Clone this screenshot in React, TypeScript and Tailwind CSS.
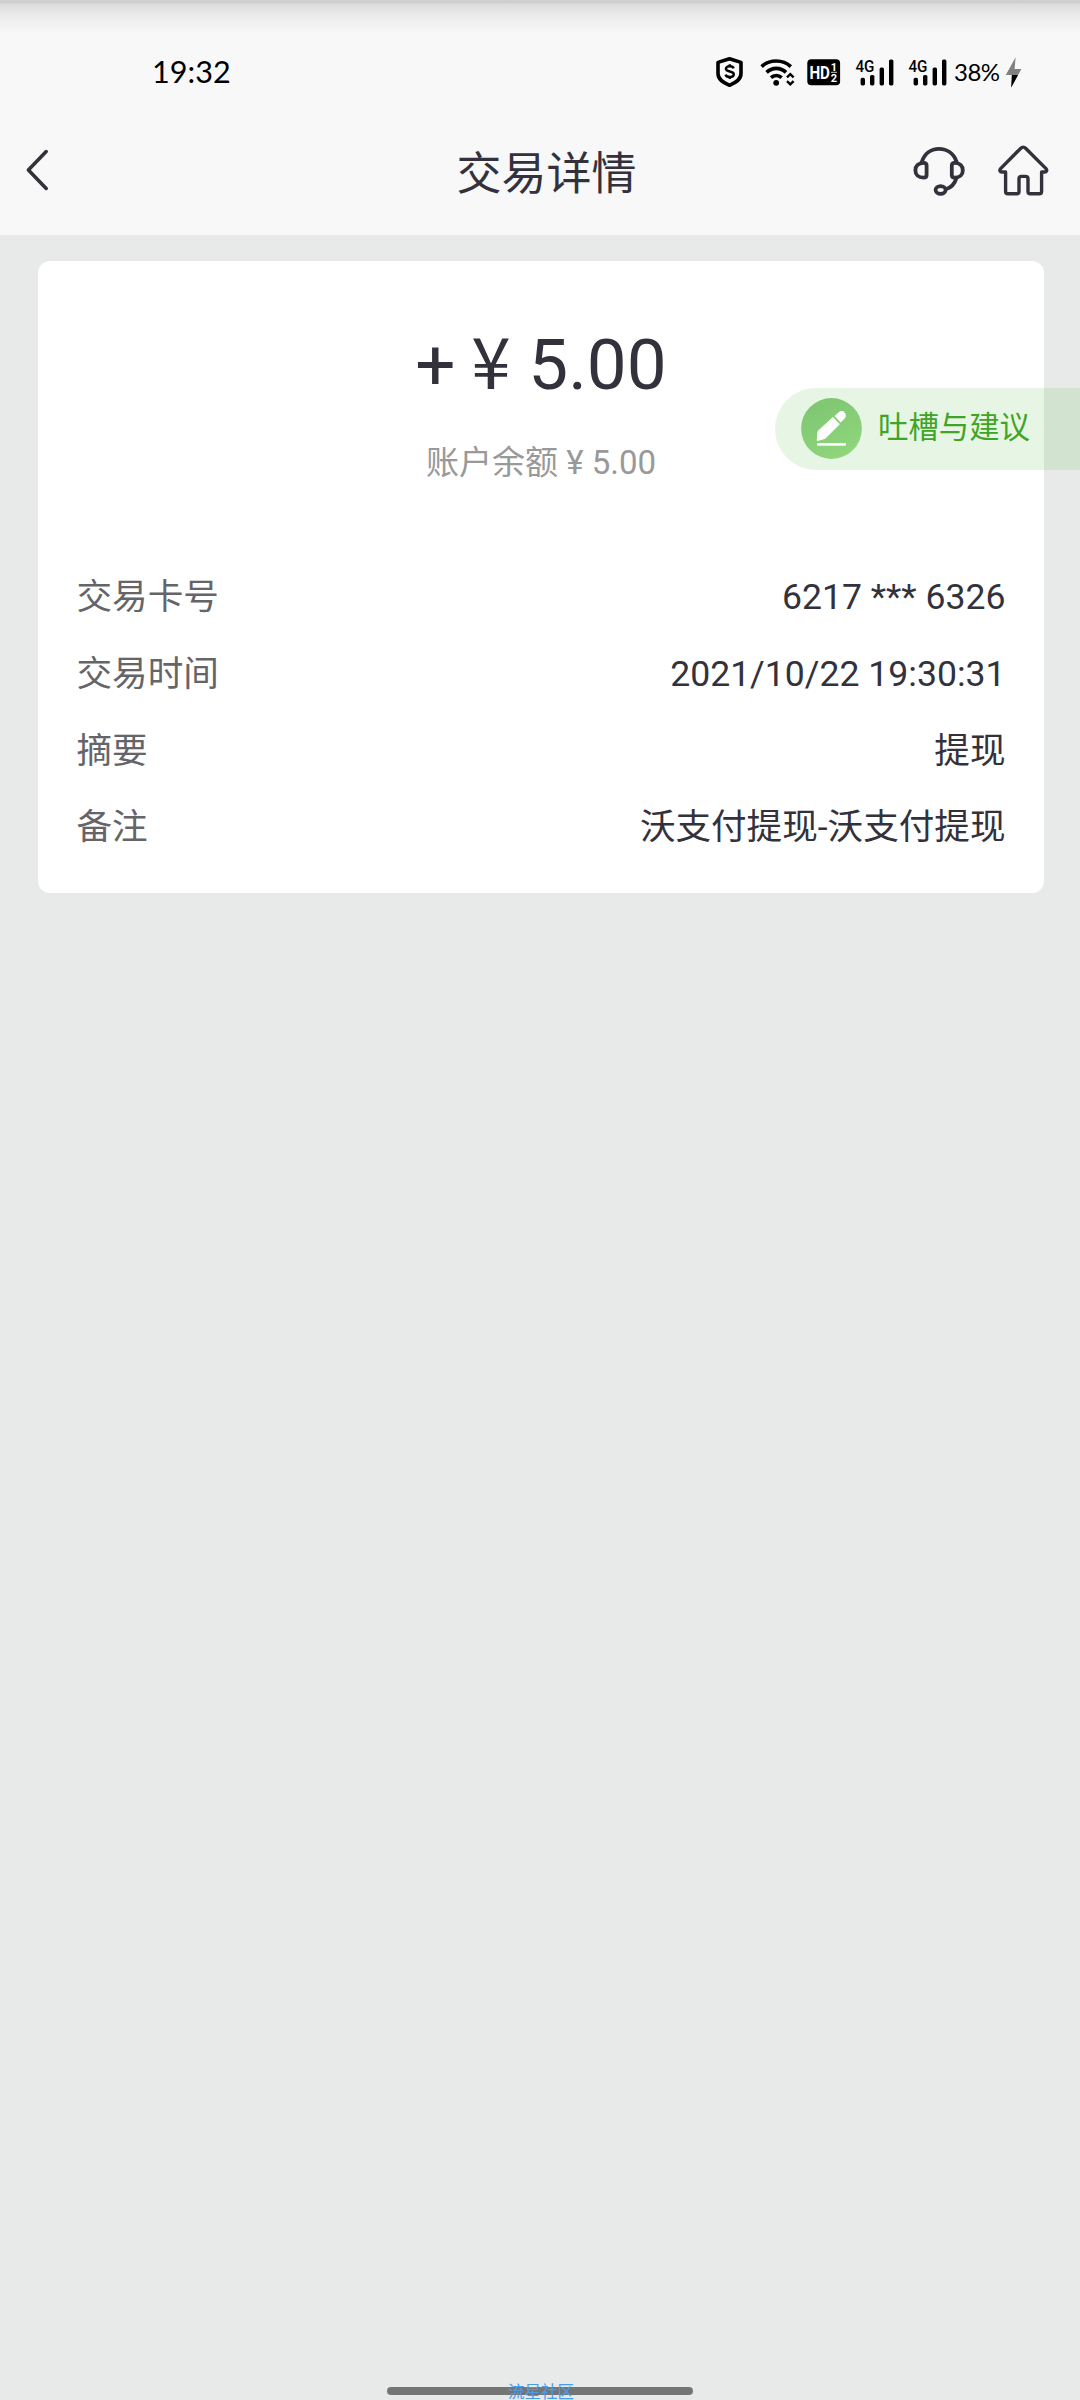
import type { ReactNode } from 'react';

const details = [
  { label: '交易卡号', value: '6217 *** 6326' },
  { label: '交易时间', value: '2021/10/22 19:30:31' },
  { label: '摘要', value: '提现' },
  { label: '备注', value: '沃支付提现-沃支付提现' },
];

function ShieldIcon() {
  return (
    <svg className="w-[30px] h-8" viewBox="0 0 30 32" fill="none" stroke="#000">
      <path d="M14.5 2.8 L26 6.4 V17.5 C26 23.5 21 26.5 14.5 29.3 C8 26.5 3 23.5 3 17.5 V6.4 Z" strokeWidth="3.6" strokeLinejoin="round" />
      <path d="M18.6 12.4 C18.2 10.8 16.6 10.2 14.8 10.2 C12.4 10.2 10.9 11.2 10.9 12.8 C10.9 16.6 18.8 14.4 18.8 18.3 C18.8 20 17 21 14.8 21 C12.6 21 11 20.2 10.6 18.6 M14.8 8.2 V10 M14.8 21 V23" strokeWidth="2.4" />
    </svg>
  );
}

function WifiIcon() {
  return (
    <svg className="w-9 h-8" viewBox="0 0 36 32" fill="none" stroke="#000" strokeWidth="3.6">
      <path d="M2.6 10.6 C10.4 3.2 24 3.2 31.8 10.6" />
      <path d="M7.6 16.4 C13.2 11 21.4 11 27 16.4" />
      <path d="M12 21.6 C15 18.8 19.6 18.8 22.6 21.6" />
      <circle cx="17.2" cy="26.8" r="2.9" fill="#000" stroke="none" />
      <path d="M28 21.4 L31.3 18.2 L34.6 21.4 M28 25.2 L31.3 28.4 L34.6 25.2" strokeWidth="2.4" />
    </svg>
  );
}

function HdIcon() {
  return (
    <svg className="w-[35px] h-8" viewBox="0 0 35 32" fontFamily="Roboto, sans-serif" fill="#fff">
      <rect x="1.3" y="3.2" width="32.8" height="26" rx="4" fill="#000" />
      <text x="3.4" y="22.8" fontSize="19" fontWeight="700" textLength="20.6" lengthAdjust="spacingAndGlyphs">HD</text>
      <text x="24.8" y="14.6" fontSize="11" fontWeight="700">1</text>
      <text x="24.8" y="26.2" fontSize="11" fontWeight="700">2</text>
      <path d="M25 16.3 H31" stroke="#fff" strokeWidth="0.8" />
    </svg>
  );
}

function SignalIcon() {
  return (
    <svg className="w-10 h-8" viewBox="0 0 40 32">
      <text x="0.4" y="16.2" fontSize="17" fontWeight="500" fontFamily="Roboto, sans-serif" textLength="19" lengthAdjust="spacingAndGlyphs">4G</text>
      <rect x="5.6" y="21.8" width="4.4" height="7.6" rx="1.6" />
      <rect x="15" y="19" width="4.4" height="10.4" rx="1.6" />
      <rect x="24.6" y="11.6" width="4.4" height="17.8" rx="1.6" />
      <rect x="34" y="3.4" width="4.4" height="26" rx="1.6" />
    </svg>
  );
}

function BoltIcon() {
  return (
    <svg className="w-[17px] h-8" viewBox="0 0 17 32">
      <path d="M10.6 1.2 L0.8 19 H7.4 L6.2 31.4 L16.4 13 H9.6 Z" fill="#808080" />
      <path d="M6.8 19 H13 L6.2 31.4 Z" />
    </svg>
  );
}

function BackIcon() {
  return (
    <svg className="w-6 h-11" viewBox="0 0 24 44" fill="none" stroke="#33323c" strokeWidth="3.6" strokeLinecap="round" strokeLinejoin="round">
      <path d="M21.2 3.6 L3.4 22 L21.2 40.4" />
    </svg>
  );
}

function HeadsetIcon() {
  return (
    <svg className="w-[52px] h-[52px]" viewBox="0 0 52 52" fill="none" stroke="#33323c" strokeWidth="3.8" strokeLinejoin="round">
      <path d="M8.6 18.4 C11.4 9.6 18 4.8 26 4.8 C34 4.8 41 9.6 43.8 18.4" />
      <path d="M10.6 18.8 C5.4 18.8 2.4 22 2.4 26.4 C2.4 30.8 5.4 33.6 10.6 33.6 C12.6 33.6 13.6 32.8 13.6 31 V21.4 C13.6 19.6 12.6 18.8 10.6 18.8 Z" />
      <path d="M41.6 18.8 C46.8 18.8 49.8 22 49.8 26.4 C49.8 30.8 46.8 33.6 41.6 33.6 C39.6 33.6 38.8 32.8 38.8 31 V21.4 C38.8 19.6 39.6 18.8 41.6 18.8 Z" />
      <path d="M43.6 33.6 C41.8 39.6 37.6 43.8 32.8 45.2" />
      <ellipse cx="27.6" cy="46" rx="5" ry="3.8" />
    </svg>
  );
}

function HomeIcon() {
  return (
    <svg className="w-[52px] h-[52px]" viewBox="0 0 52 52" fill="none" stroke="#33323c" strokeWidth="3.4" strokeLinejoin="round">
      <path d="M23.8 4.2 C25.2 2.8 27.2 2.8 28.6 4.2 L49 24.6 C50.4 26.4 49.6 28 47.6 28 H44.6 V47.2 C44.6 48.8 43.8 49.8 42.2 49.8 H33.4 C31.8 49.8 31 49 31 47.4 V34.8 C31 33.2 30 32.4 28.4 32.4 H24.6 C23 32.4 22 33.2 22 34.8 V47.4 C22 49 21.2 49.8 19.6 49.8 H11 C9.4 49.8 8.6 48.8 8.6 47.2 V28 H5 C2.8 28 2.2 26.2 3.6 24.6 Z" />
    </svg>
  );
}

function PencilBadge() {
  return (
    <svg className="w-[61px] h-[61px]" viewBox="0 0 61 61">
      <defs>
        <linearGradient id="badge" x1="0" y1="0" x2="0.5" y2="1">
          <stop offset="0" stopColor="#7cc46f" />
          <stop offset="1" stopColor="#8ed57c" />
        </linearGradient>
      </defs>
      <circle cx="30.5" cy="30.5" r="30.4" fill="url(#badge)" />
      <path d="M17 33.2 L32 19.4 L38.4 26.2 L24 40.4 L16.2 42.6 Z" fill="#fff" stroke="#fff" strokeLinejoin="round" />
      <path d="M33.6 18 L37.6 14.2 C39.6 12.4 42 12.6 43.6 14.4 C45.4 16.4 45.4 18.6 43.6 20.6 L39.8 24.4 Z" fill="#fff" />
      <path d="M16.2 46.4 H44.8" stroke="#fff" strokeWidth="2.6" />
    </svg>
  );
}

function StatusBar() {
  return (
    <div className="flex items-center h-[144px] pr-[58px] pl-[152px] bg-[linear-gradient(to_bottom,#cfcfcf_0px,#cfcfcf_3px,#dcdcdc_4px,#ebebeb_16px,#f8f8f8_34px)]">
      <span className="pt-px font-[Lato] text-[30.6px] leading-none text-black">19:32</span>
      <div className="flex items-center ml-auto">
        <ShieldIcon />
        <div className="flex ml-3.5"><WifiIcon /></div>
        <div className="flex ml-[11px]"><HdIcon /></div>
        <div className="flex gap-[13px] ml-3.5">
          <SignalIcon />
          <SignalIcon />
        </div>
        <span className="w-[51px] pl-1.5 font-[Lato] text-[24px] leading-none tracking-[-0.5px] text-black whitespace-nowrap">38%</span>
        <div className="flex ml-1.5"><BoltIcon /></div>
      </div>
    </div>
  );
}

function NavBar() {
  return (
    <div className="flex items-center h-[91px] pl-[25px] pr-[31px] pb-[39px]">
      <div className="flex w-[155px]"><BackIcon /></div>
      <h1 className="flex-1 pt-[9px] text-center text-[45px] leading-[52px] text-[#33323c]">交易详情</h1>
      <div className="flex gap-8">
        <HeadsetIcon />
        <HomeIcon />
      </div>
    </div>
  );
}

function DetailRow({ label, children }: { label: string; children: ReactNode }) {
  return (
    <div className="flex items-center justify-between h-[76.8px] text-[35.6px] leading-none">
      <dt className="text-[#656569]">{label}</dt>
      <dd className="text-[#33323c]">{children}</dd>
    </div>
  );
}

export default function App() {
  return (
    <div className="relative w-[1080px] h-[2400px] overflow-hidden bg-[#e8eae9] font-[Roboto,'Noto_Sans_CJK_SC',sans-serif]">
      <header className="h-[235px] bg-[#f8f8f8]">
        <StatusBar />
        <NavBar />
      </header>

      <main className="mt-[26px] ml-[38px] w-[1006px] h-[632px] rounded-xl bg-white">
        <div className="flex flex-col items-center pt-[68px]">
          <div className="h-[72px] text-[71px] leading-[72px] text-[#33323c]">
            + <span className="-ml-[2px] font-['Noto_Sans_CJK_SC'] leading-[0]">¥</span> 5.00
          </div>
          <div className="mt-[42px] text-[33px] leading-10 text-[#999]">账户余额 ¥ 5.00</div>
        </div>
        <dl className="mt-[76.5px] px-[38.5px]">
          {details.map((row) => (
            <DetailRow key={row.label} label={row.label}>{row.value}</DetailRow>
          ))}
        </dl>
      </main>

      {/* Floating feedback entry */}
      <button className="absolute top-[388px] right-0 flex items-center w-[305px] h-[82px] pl-[26px] pb-px rounded-l-full bg-[#3cb41e]/12">
        <PencilBadge />
        <span className="ml-4 text-[30.4px] leading-none text-[#3fa526] whitespace-nowrap">吐槽与建议</span>
      </button>

      {/* Gesture bar */}
      <div className="absolute bottom-[5px] left-[387px] w-[306px] h-2 rounded-full bg-[#747676]" />
      <span className="absolute top-[2385px] left-[508px] text-[16.5px] leading-4 text-[#4a9be8] whitespace-nowrap">流星社区</span>
    </div>
  );
}
